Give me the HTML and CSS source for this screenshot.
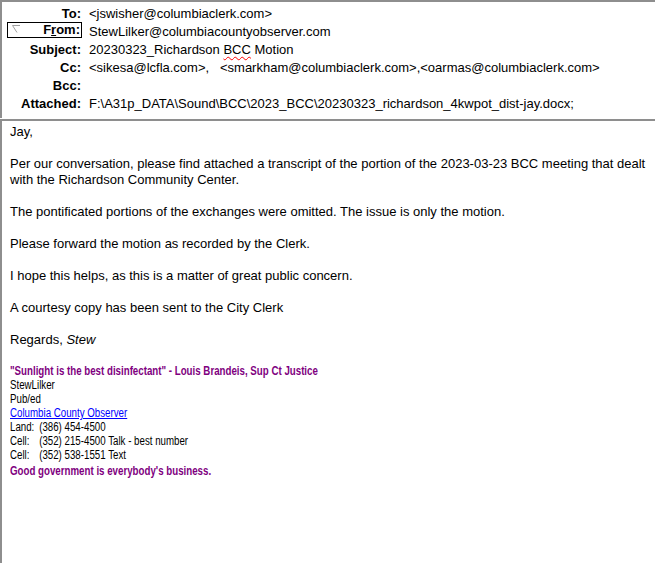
FILE: index.html
```html
<!DOCTYPE html>
<html>
<head>
<meta charset="utf-8">
<link rel="stylesheet" href="styles.css">
</head>
<body>
<div class="window">
  <div class="header">
    <div class="row"><div class="label">To:</div><div class="value">&lt;jswisher@columbiaclerk.com&gt;</div></div>
    <div class="row"><div class="label from-label"><span class="from-box"><svg class="from-icon" width="9" height="9" viewBox="0 0 9 9"><path d="M0.5 0.5 H8 M0.5 0.5 L5 7.5" stroke="#a0a0a0" stroke-width="1" fill="none"/></svg><span>F<u>r</u>om:</span></span></div><div class="value">StewLilker@columbiacountyobserver.com</div></div>
    <div class="row"><div class="label">Subject:</div><div class="value">20230323_Richardson <span class="spell">BCC</span> Motion</div></div>
    <div class="row"><div class="label">Cc:</div><div class="value">&lt;sikesa@lcfla.com&gt;,&nbsp;&nbsp; &lt;smarkham@columbiaclerk.com&gt;,&lt;oarmas@columbiaclerk.com&gt;</div></div>
    <div class="row"><div class="label">Bcc:</div><div class="value"></div></div>
    <div class="row"><div class="label">Attached:</div><div class="value">F:\A31p_DATA\Sound\BCC\2023_BCC\20230323_richardson_4kwpot_dist-jay.docx;</div></div>
  </div>
  <div class="body">
    <p>Jay,</p>
    <p>Per our conversation, please find attached a transcript of the portion of the 2023-03-23 BCC meeting that dealt with the Richardson Community Center.</p>
    <p>The pontificated portions of the exchanges were omitted. The issue is only the motion.</p>
    <p>Please forward the motion as recorded by the Clerk.</p>
    <p>I hope this helps, as this is a matter of great public concern.</p>
    <p>A courtesy copy has been sent to the City Clerk</p>
    <p>Regards, <i>Stew</i></p>
    <div class="sig">
      <div class="quote">"Sunlight is the best disinfectant" - Louis Brandeis, Sup Ct Justice</div>
      <div class="line">StewLilker</div>
      <div class="line">Pub/ed</div>
      <div class="line"><a class="link" href="#">Columbia County Observer</a></div>
      <div class="line"><span class="tag">Land:</span>(386) 454-4500</div>
      <div class="line"><span class="tag">Cell:</span>(352) 215-4500 Talk - best number</div>
      <div class="line"><span class="tag">Cell:</span>(352) 538-1551 Text</div>
      <div class="motto">Good government is everybody's business.</div>
    </div>
  </div>
</div>
</body>
</html>
```

FILE: styles.css
```css
html, body {
  margin: 0;
  padding: 0;
  background: #ffffff;
}
body {
  font-family: "Liberation Sans", Arial, sans-serif;
  font-size: 13px;
  color: #000000;
}
.window {
  width: 655px;
  height: 563px;
  display: flex;
  flex-direction: column;
  overflow: hidden;
}
.header {
  border-top: 2px solid #8e8e8e;
  border-left: 2px solid #8e8e8e;
  padding: 3px 0 5px 0;
}
.row {
  display: grid;
  grid-template-columns: 79px 1fr;
  column-gap: 8px;
  height: 18px;
  line-height: 18px;
  white-space: nowrap;
}
.label {
  font-weight: bold;
  text-align: right;
  color: #000;
}
.from-label {
  display: flex;
  justify-content: flex-end;
}
.from-box {
  display: flex;
  align-items: center;
  justify-content: space-between;
  width: 75px;
  height: 16px;
  margin-top: -1px;
  margin-right: -1px;
  border: 1px solid #000;
  padding-right: 1px;
  box-sizing: border-box;
  line-height: 14px;
}
.from-icon {
  margin-left: 4px;
  margin-top: -2px;
}
.spell {
  text-decoration: underline wavy #ff0000;
  text-decoration-thickness: 1px;
  text-underline-offset: 2px;
}
.body {
  flex: 1;
  margin-top: 1px;
  border-top: 2px solid #8e8e8e;
  border-left: 2px solid #8e8e8e;
  padding: 3px 8px 0 8px;
  line-height: 16px;
}
.body p {
  margin: 0 0 16px 0;
}
.sig {
  font-size: 12px;
  line-height: 14px;
  transform: scaleX(0.81);
  transform-origin: left top;
  white-space: nowrap;
}
.quote {
  color: #800080;
  font-weight: bold;
}
.motto {
  color: #800080;
  font-weight: bold;
  line-height: 16px;
  margin-top: 1px;
}
.link {
  color: #0000ff;
  text-decoration: underline;
}
.tag {
  display: inline-block;
  width: 36px;
}
```
